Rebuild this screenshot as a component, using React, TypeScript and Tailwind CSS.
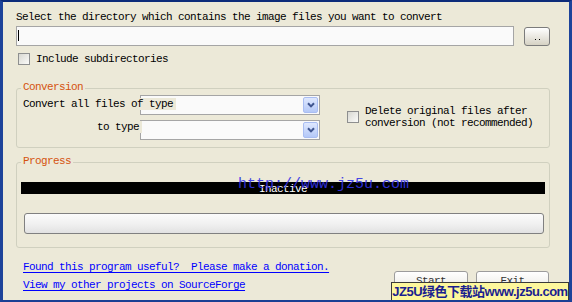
import React from "react";

const mono =
  "font-['Liberation_Mono','DejaVu_Sans_Mono',monospace] text-[11px] leading-[12px] tracking-[-0.6px]";

function Checkbox() {
  return (
    <div className="w-[12px] h-[12px] shrink-0 border border-[#8e8f8f] bg-gradient-to-br from-[#d8d8d2] to-[#fbfbf9]" />
  );
}

function Arrow() {
  return (
    <div className="absolute right-[1px] top-[1px] bottom-[1px] w-[15px] rounded-[2px] border border-[#a9bdf2] bg-gradient-to-b from-[#dfe8fe] to-[#b4c8f7] flex items-center justify-center">
      <svg width="8" height="6" viewBox="0 0 8 6">
        <path d="M1 1.2 L4 4.4 L7 1.2" stroke="#3f5590" strokeWidth="2" fill="none" />
      </svg>
    </div>
  );
}

function Select() {
  return (
    <div className="relative w-[180px] h-[20px] shrink-0 border border-[#a5a5a5] bg-[#fafafa]">
      <Arrow />
    </div>
  );
}

function Group({
  label,
  height,
  children,
}: {
  label: string;
  height: string;
  children: React.ReactNode;
}) {
  return (
    <div className={"relative border border-[#d0d0bf] rounded-[3px] " + height}>
      <span
        className={
          "absolute left-[4px] top-[-8px] px-[2px] bg-[#ece9d8] text-[#d5530f] " + mono
        }
      >
        {label}
      </span>
      {children}
    </div>
  );
}

function XPButton({ label, w }: { label: string; w: string }) {
  return (
    <div
      className={
        "h-[23px] rounded-[3px] border border-[#9c9c9c] bg-gradient-to-b from-[#ffffff] to-[#e6e5dd] flex justify-center pt-[3px] text-[#333] " +
        w +
        " " +
        mono
      }
    >
      {label}
    </div>
  );
}

export default function App() {
  return (
    <div className="relative w-[572px] h-[302px] overflow-hidden bg-[#ece9d8] border-t-2 border-b-2 border-l-[3px] border-r-[3px] border-t-[#0d2c7a] border-b-[#1a3f94] border-l-[#1d439a] border-r-[#1d439a] text-black">
      <div className="pl-[13px] pr-[19px] pt-[9px]">
        <div className={mono}>
          Select the directory which contains the image files you want to convert
        </div>

        <div className="flex items-start mt-[3px]">
          <div className="relative w-[498px] h-[20px] border border-[#a5a5a5] bg-[#fafafa]">
            <div className="absolute left-[1px] top-[3px] w-[1px] h-[11px] bg-black" />
          </div>
          <div className="ml-[10px] mt-[1px] w-[26px] h-[19px] rounded-[3px] border border-[#7b7b7b] bg-gradient-to-b from-[#ffffff] to-[#d6d2c4] flex items-end justify-center pb-[5px] gap-[3px]">
            <div className="w-[1px] h-[1px] bg-black" />
            <div className="w-[1px] h-[1px] bg-black" />
          </div>
        </div>

        <div className="flex items-center mt-[7px] ml-[2px]">
          <Checkbox />
          <span className={"ml-[6px] " + mono}>Include subdirectories</span>
        </div>

        <div className="mt-[23px]">
          <Group label="Conversion" height="h-[60px]">
            <div className="flex pt-[6px] pl-[6px]">
              <div className="flex flex-col gap-[5px]">
                <div className="flex items-start">
                  <span className={"relative z-10 mt-[3px] pr-[3px] bg-[#ece9d8] " + mono}>
                    Convert all files of type
                  </span>
                  <div className="ml-[-36px]">
                    <Select />
                  </div>
                </div>
                <div className="flex items-start">
                  <span className={"relative z-10 ml-[74px] mt-[1px] pr-[3px] bg-[#ece9d8] " + mono}>
                    to type
                  </span>
                  <div className="ml-[-2px]">
                    <Select />
                  </div>
                </div>
              </div>
              <div className="flex items-center ml-[27px] mb-[2px]">
                <Checkbox />
                <div className={"ml-[6px] " + mono}>
                  Delete original files after
                  <br />
                  conversion (not recommended)
                </div>
              </div>
            </div>
          </Group>
        </div>

        <div className="mt-[14px]">
          <Group label="Progress" height="h-[86px]">
            <div className="pt-[19px] pl-[4px] pr-[4px]">
              <div className="h-[12px] bg-black flex justify-center overflow-hidden">
                <span className={"text-white pt-[1px] " + mono}>Inactive</span>
              </div>
              <div className="ml-[3px] mt-[19px] w-[520px] h-[21px] rounded-[3px] border border-[#808080] bg-gradient-to-b from-[#fbfbfb] via-[#f1f1f1] to-[#e2e2e2]" />
            </div>
          </Group>
        </div>

        <div className="flex justify-between">
          <div className={"ml-[7px] mt-[13px] flex flex-col gap-[6px] text-[#0000ff] " + mono}>
            <span className="underline underline-offset-[2px]">
              Found this program useful?&nbsp; Please make a donation.
            </span>
            <span className="underline underline-offset-[2px]">
              View my other projects on SourceForge
            </span>
          </div>
          <div className="mt-[23px] mr-[1px] flex gap-[8px]">
            <XPButton label="Start" w="w-[74px]" />
            <XPButton label="Exit" w="w-[73px]" />
          </div>
        </div>
      </div>

      <div className="absolute left-[235px] top-[174px] text-[15px] leading-[18px] font-['Liberation_Mono',monospace] text-[#3434e6] opacity-90 whitespace-nowrap">
        http://www.jz5u.com
      </div>

      <div className="absolute left-[388px] top-[280px] w-[178px] h-[20px] bg-[#fdf79c] border border-[#3a3a3a] flex items-center justify-center overflow-hidden whitespace-nowrap text-[13px] leading-[16px] font-bold tracking-[-0.5px] text-[#1b1f8f] font-['Liberation_Sans','Noto_Sans_CJK_SC',sans-serif]">
        JZ5U绿色下载站www.jz5u.com
      </div>
    </div>
  );
}
